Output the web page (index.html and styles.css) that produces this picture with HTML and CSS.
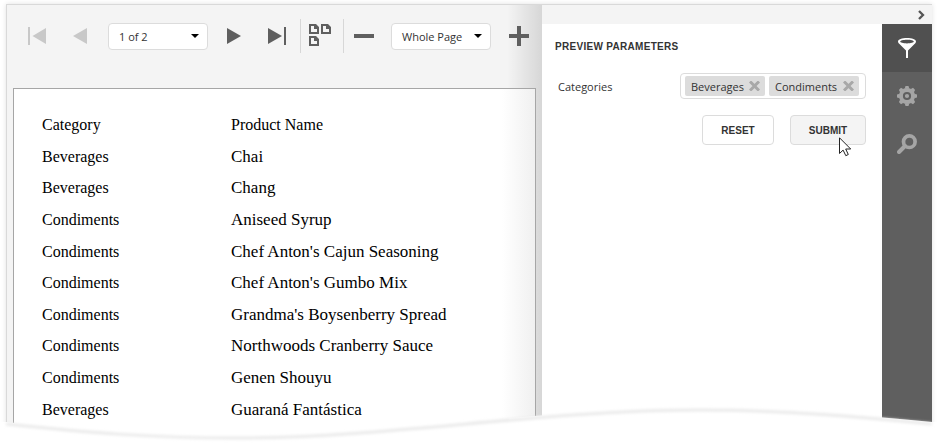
FILE: index.html
```html
<!DOCTYPE html>
<html lang="en">
<head>
<meta charset="utf-8">
<title>Report Preview</title>
<link rel="stylesheet" href="styles.css">
</head>
<body>
<div class="viewer">
  <main class="preview">
    <div class="toolbar">
      <svg class="ico first off" width="18" height="18" viewBox="0 0 18 18"><path d="M0 0h2v18H0zM18 1v16L4.500 9z"/></svg>
      <svg class="ico prev off" width="14" height="16" viewBox="0 0 14 16"><path d="M14 0v16L0 8z"/></svg>
      <div class="select pages"><span>1 of 2</span><svg width="8" height="4" viewBox="0 0 8 4"><path d="M0 0h8L4 4z"/></svg></div>
      <svg class="ico next" width="14" height="16" viewBox="0 0 14 16"><path d="M0 0v16l14-8z"/></svg>
      <svg class="ico last" width="18" height="18" viewBox="0 0 18 18"><path d="M16 0h2v18h-2zM0 1v16l14-8z"/></svg>
      <i class="sep"></i>
      <svg class="ico multi" width="22" height="22" viewBox="0 0 22 22"><path fill-rule="evenodd" d="M0 0h7l3 3v7H0zM2 2v6h6V5H5V2zM12 0h7l3 3v7H12zM14 2v6h6V5h-3V2zM0 12h7l3 3v7H0zM2 14v6h6v-3H5v-3z"/></svg>
      <i class="sep"></i>
      <svg class="ico minus" width="20" height="4"><path d="M0 0h20v4H0z"/></svg>
      <div class="select zoom"><span>Whole Page</span><svg width="8" height="4" viewBox="0 0 8 4"><path d="M0 0h8L4 4z"/></svg></div>
      <svg class="ico plus" width="20" height="20"><path d="M8 0h4v8h8v4h-8v8H8v-8H0V8h8z"/></svg>
    </div>
    <div class="page">
      <div class="row head"><span>Category</span><span>Product Name</span></div>
      <div class="row"><span>Beverages</span><span>Chai</span></div>
      <div class="row"><span>Beverages</span><span>Chang</span></div>
      <div class="row"><span>Condiments</span><span>Aniseed Syrup</span></div>
      <div class="row"><span>Condiments</span><span>Chef Anton's Cajun Seasoning</span></div>
      <div class="row"><span>Condiments</span><span>Chef Anton's Gumbo Mix</span></div>
      <div class="row"><span>Condiments</span><span>Grandma's Boysenberry Spread</span></div>
      <div class="row"><span>Condiments</span><span>Northwoods Cranberry Sauce</span></div>
      <div class="row"><span>Condiments</span><span>Genen Shouyu</span></div>
      <div class="row"><span>Beverages</span><span>Guaraná Fantástica</span></div>
    </div>
  </main>
  <aside class="side">
    <div class="collapse"><svg width="7" height="10" viewBox="0 0 7 10"><path d="M1 1l4 4-4 4" fill="none" stroke="#555" stroke-width="2.300"/></svg></div>
    <div class="side-body">
      <section class="params">
        <h2>PREVIEW PARAMETERS</h2>
        <div class="field">
          <label>Categories</label>
          <div class="tags">
            <div class="tag"><span>Beverages</span><svg width="11" height="10" viewBox="0 0 11 10"><path d="M1 .5l9 9M10 .5l-9 9"/></svg></div>
            <div class="tag wide"><span>Condiments</span><svg width="11" height="10" viewBox="0 0 11 10"><path d="M1 .5l9 9M10 .5l-9 9"/></svg></div>
          </div>
        </div>
        <div class="buttons">
          <button class="reset">RESET</button>
          <button class="submit">SUBMIT<svg class="cursor" width="13" height="20" viewBox="0 0 13 20"><path d="M.5 .8v15.700l3.600-3.400 2.700 5.600 2.500-1.200-2.600-5.500h5z" fill="#fff" stroke="#222"/></svg></button>
        </div>
      </section>
      <nav class="tabs">
        <div class="tab active"><svg width="20" height="22" viewBox="0 0 20 22"><path fill="#fff" fill-rule="evenodd" d="M10 1c5 0 9 1.300 9 3.500 0 1-.6 1.700-1.500 2.500L11 13.500V21H9v-7.500L2.500 7C1.600 6.200 1 5.500 1 4.500 1 2.300 5 1 10 1zm0 1.700c-4 0-6.800.8-6.800 1.900S6 6.400 10 6.400s6.800-.7 6.800-1.800S14 2.700 10 2.700z"/></svg></div>
        <div class="tab"><svg width="20" height="20" viewBox="-10 -10 20 20"><g fill="#a5a5a5"><circle r="8"/><path id="t" d="M-2.300-7.200l.8-2.800h3l.8 2.800z"/><use href="#t" transform="rotate(45)"/><use href="#t" transform="rotate(90)"/><use href="#t" transform="rotate(135)"/><use href="#t" transform="rotate(180)"/><use href="#t" transform="rotate(225)"/><use href="#t" transform="rotate(270)"/><use href="#t" transform="rotate(315)"/></g><circle r="3.100" fill="#a5a5a5" stroke="#5f5f5f" stroke-width="2"/></svg></div>
        <div class="tab"><svg width="20" height="20" viewBox="0 0 20 20" fill="none" stroke="#a5a5a5"><circle cx="12.300" cy="7.700" r="5.800" stroke-width="3.700"/><path d="M8 12l-6 6" stroke-width="4" stroke-linecap="round"/></svg></div>
      </nav>
    </div>
  </aside>
</div>
<svg class="wave" width="938" height="44" viewBox="0 400 938 44">
  <defs><filter id="soft" x="-5%" y="-50%" width="110%" height="200%"><feGaussianBlur stdDeviation="1.500"/></filter></defs>
  <path class="cut" d="M0 422H6C90 431 155 436 235 436C390 436 540 408 700 408C790 408 870 416 932 422H938V444H0z"/>
  <path class="shade" d="M6 424C90 433 155 438 235 438C390 438 540 410 700 410C790 410 870 418 932 424" filter="url(#soft)"/>
</svg>
</body>
</html>
```
FILE: styles.css
```css
* { box-sizing: border-box; }
body {
  margin: 0;
  height: 444px;
  overflow: hidden;
  position: relative;
  background: #fff;
  font: 11px "Open Sans", "Noto Sans", sans-serif;
  color: #333;
}
svg { display: block; flex: none; }
.viewer {
  display: flex;
  width: 926px;
  height: 436px;
  margin: 4px 0 0 6px;
  border: solid #d9d9d9;
  border-width: 1px 0 0 1px;
  box-shadow: 0 0 5px rgba(0,0,0,.12);
}
.preview {
  flex: none;
  width: 535px;
  background: linear-gradient(90deg, transparent 500px, rgba(0,0,0,.12)), #f4f4f4;
}
.toolbar {
  display: flex;
  align-items: center;
  height: 62px;
  padding-left: 21px;
}
.ico { fill: #5f5f5f; }
.off { fill: #c8c8c8; }
.prev { margin-left: 27px; }
.next { margin-left: 19px; }
.last { margin-left: 27px; }
.sep { width: 1px; height: 34px; background: #d7d7d7; }
.last + .sep { margin-left: 14px; }
.multi { margin: -2px 12px 0 8px; }
.minus { margin-left: 10px; }
.plus { margin-left: 18px; }
.select {
  display: flex;
  align-items: center;
  justify-content: space-between;
  width: 100px;
  height: 27px;
  padding: 0 8px 0 10px;
  border: 1px solid #dcdcdc;
  border-radius: 4px;
  background: #fff;
}
.pages { margin-left: 21px; }
.zoom { margin-left: 17px; }
.page {
  width: 523px;
  height: 352px;
  margin: 21px 0 0 6px;
  padding: 20px 0 0 28px;
  border: 1px solid #a6a6a6;
  background: linear-gradient(90deg, #fff 488px, #f0f0f0);
  color: #000;
  font-family: "Liberation Serif", serif;
}
.row {
  display: grid;
  grid-template-columns: 189px 1fr;
  height: 31.650px;
  line-height: 31px;
  font-size: 16px;
  white-space: nowrap;
}
.row:not(.head) span + span { font-size: 17px; }
.side { flex: 1; display: flex; flex-direction: column; background: #fff; }
.collapse {
  display: flex;
  justify-content: flex-end;
  align-items: center;
  flex: none;
  height: 19px;
  padding-right: 7px;
  background: #f4f4f4;
}
.side-body { display: flex; flex: 1; }
.params { width: 340px; padding: 15px 16px 0 13px; }
h2 {
  margin: 0;
  font: bold 10px/15px "Liberation Sans", sans-serif;
  letter-spacing: .3px;
}
.field {
  display: flex;
  justify-content: space-between;
  align-items: center;
  margin: 19px 0 0 3px;
  height: 26px;
}
.tags {
  display: flex;
  gap: 4px;
  width: 186px;
  height: 26px;
  padding: 2px 4px;
  border: 1px solid #dcdcdc;
  border-radius: 4px;
}
.tag {
  display: flex;
  align-items: center;
  justify-content: space-between;
  width: 80px;
  height: 20px;
  padding: 0 5px 0 6px;
  border-radius: 2px;
  background: #dcdcdc;
}
.tag.wide { width: 90px; }
.tag svg { stroke: #a8a8a8; stroke-width: 3; }
.buttons { display: flex; justify-content: flex-end; gap: 16px; margin-top: 16px; }
button {
  position: relative;
  width: 72px;
  height: 30px;
  padding: 0;
  border: 1px solid #dcdcdc;
  border-radius: 4px;
  background: #fff;
  color: #333;
  font: bold 10px "Liberation Sans", sans-serif;
}
.submit { width: 76px; background: #f4f4f4; }
.cursor { position: absolute; left: 48px; top: 21px; }
.tabs { width: 50px; background: #5f5f5f; }
.tab { display: flex; align-items: center; justify-content: center; height: 48px; }
.active { background: #505050; }
.wave { position: absolute; left: 0; top: 400px; }
.cut { fill: #fff; }
.shade { fill: none; stroke: #e6e6e6; stroke-width: 2.500; }
```
